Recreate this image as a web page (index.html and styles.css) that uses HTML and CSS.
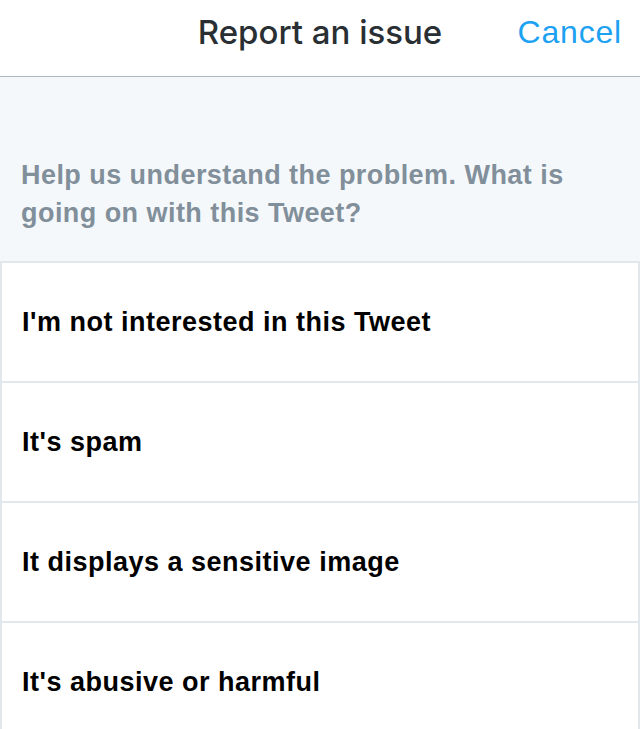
FILE: index.html
```html
<!DOCTYPE html>
<html>
<head>
<meta charset="utf-8">
<link rel="stylesheet" href="styles.css">
</head>
<body>
<header class="bar">
  <h1 class="title">Report an issue</h1>
  <span class="cancel">Cancel</span>
</header>
<section class="intro">
  <p class="prompt">Help us understand the problem. What is going on with this Tweet?</p>
</section>
<ul class="options">
  <li class="option">I'm not interested in this Tweet</li>
  <li class="option">It's spam</li>
  <li class="option">It displays a sensitive image</li>
  <li class="option">It's abusive or harmful</li>
</ul>
</body>
</html>
```

FILE: styles.css
```css
html, body {
  margin: 0;
  padding: 0;
  background: #ffffff;
  font-family: "Liberation Sans", Arial, sans-serif;
}
.bar {
  height: 76px;
  border-bottom: 1px solid #aab8c2;
  display: flex;
  align-items: center;
  justify-content: center;
  position: relative;
  background: #fff;
}
.title {
  margin: 0;
  font-family: Inter, "Liberation Sans", sans-serif;
  font-size: 33px;
  font-weight: 500;
  color: #292f33;
  padding-bottom: 12px;
}
.cancel {
  position: absolute;
  right: 18px;
  top: 14px;
  font-size: 32px;
  letter-spacing: 0.8px;
  color: #1da1f2;
}
.intro {
  height: 184px;
  background: #f5f8fa;
  box-sizing: border-box;
  padding: 79px 40px 0 21px;
}
.prompt {
  margin: 0;
  font-size: 27px;
  font-weight: 700;
  line-height: 38px;
  letter-spacing: 0.45px;
  color: #818f9b;
}
.options {
  list-style: none;
  margin: 0;
  padding: 0;
  border-left: 2px solid #e1e8ed;
  border-right: 2px solid #e1e8ed;
  border-top: 2px solid #e1e8ed;
}
.option {
  height: 118px;
  display: flex;
  align-items: center;
  padding-left: 20px;
  font-size: 27px;
  font-weight: 700;
  letter-spacing: 0.5px;
  color: #000;
  border-bottom: 2px solid #e1e8ed;
}
```
